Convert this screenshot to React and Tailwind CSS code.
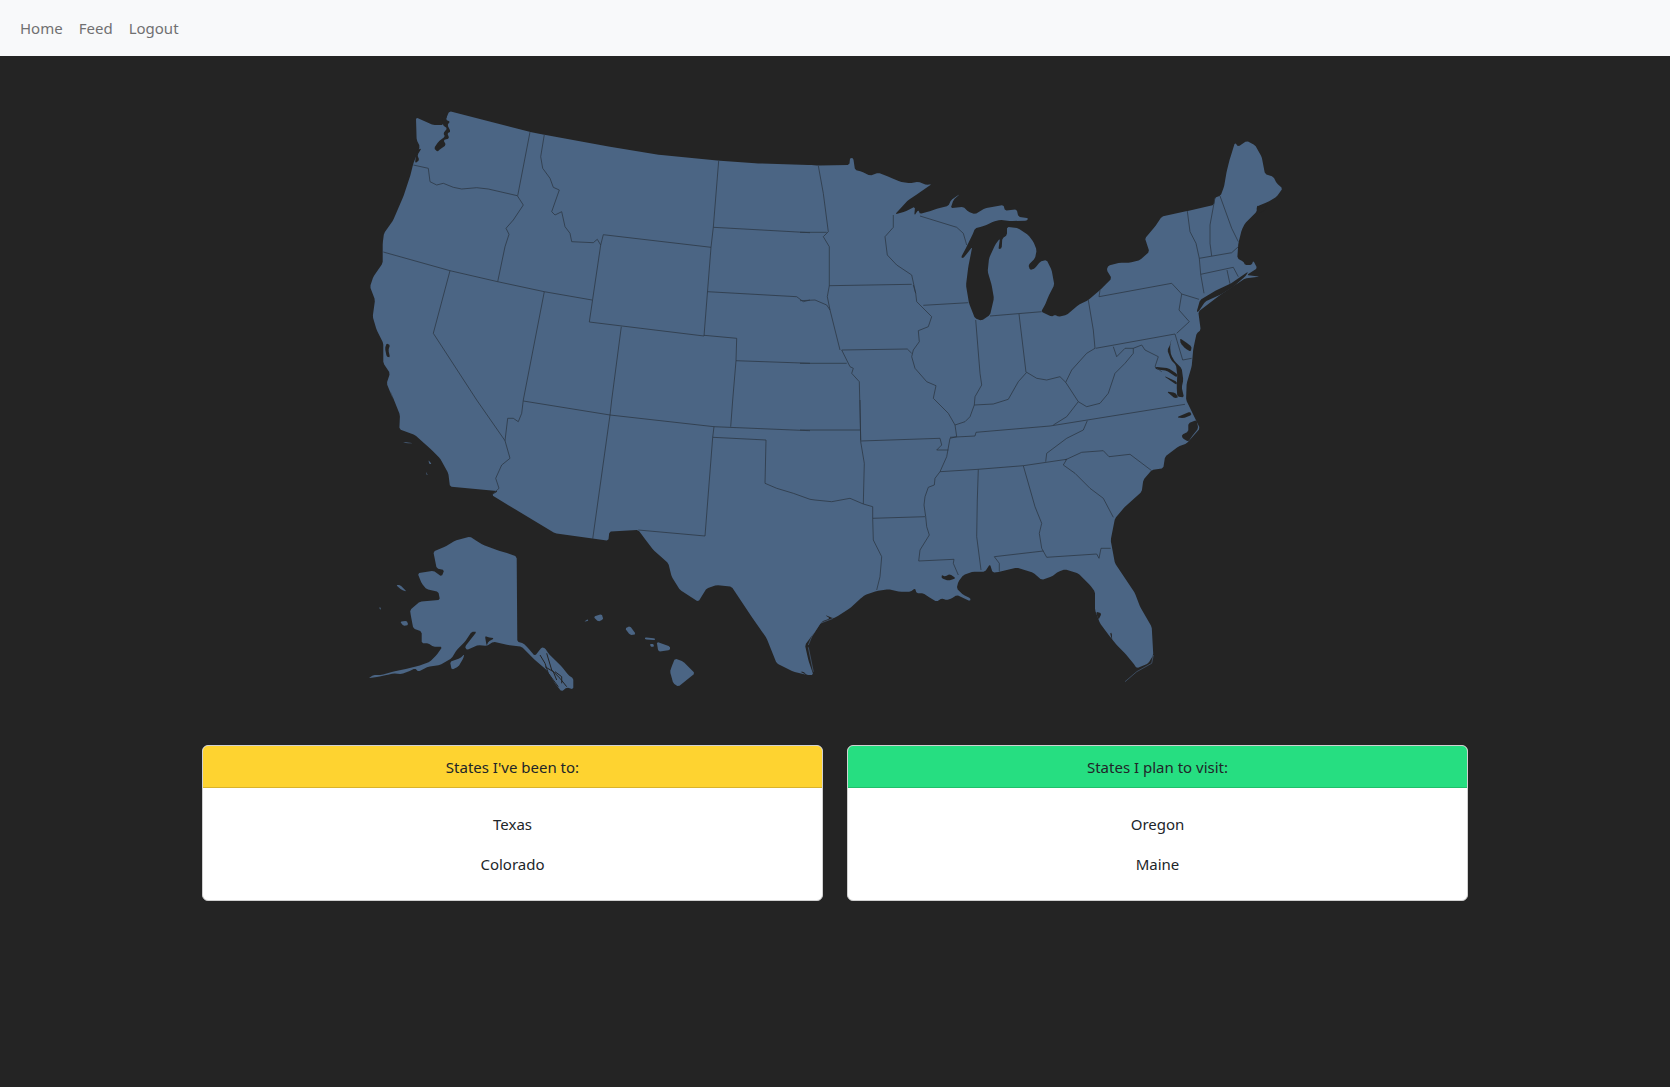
const parse = (ox, oy, s) =>
  s.trim().split(/\s+/).map((p) => {
    const [x, y] = p.split(",").map(Number);
    return [ox + x / 3, oy + y / 3];
  });
const Z1 = (s) => parse(360, 100, s);
const Z2 = (s) => parse(800, 120, s);
const Z3 = (s) => parse(360, 390, s);
const Z4 = (s) => parse(800, 400, s);
const Z8 = (s) => parse(1130, 130, s);
const Z9 = (s) => parse(1060, 300, s);
const ZL = (s) => parse(885, 170, s);
const ZG = (s) => parse(800, 560, s);
const ZA = (s) => parse(365, 530, s);
const d = (pts, close = true) =>
  "M" + pts.map(([x, y]) => x.toFixed(1) + " " + y.toFixed(1)).join("L") + (close ? "Z" : "");
const soften = (pts) => {
  const out = [];
  for (let i = 0; i < pts.length; i++) {
    const a = pts[i];
    const b = pts[(i + 1) % pts.length];
    const len = Math.hypot(b[0] - a[0], b[1] - a[1]) || 1;
    const cut = Math.min(0.2, 1.5 / len);
    out.push([a[0] + (b[0] - a[0]) * cut, a[1] + (b[1] - a[1]) * cut]);
    out.push([a[0] + (b[0] - a[0]) * (1 - cut), a[1] + (b[1] - a[1]) * (1 - cut)]);
  }
  return out;
};

const mainland = [
  ...Z1("168,52 220,75 250,75 268,33 510,96 553,104 750,140 900,165 1076,182 1190,190 1350,195"),
  ...Z2("55,137 148,135 150,114 160,115 165,150 185,155 210,167 235,158 270,172 300,185 330,190"),
  ...ZL("100,35 125,45 140,42 100,70 70,90 30,133 60,125 90,110 88,137 100,120 105,132 130,125 160,115 190,108 198,90 225,72 205,90 197,115 235,110 250,125 270,133 300,115 355,105 360,122 395,118 400,140 430,145 425,152 378,153 345,150 325,155 305,165 290,170 270,175 262,195 245,230 228,262 235,265 262,230 250,290 243,345 252,400 270,445 290,452 315,435 327,385 320,345 308,305 312,265 330,225 345,205 340,238 350,235 352,205 366,195 366,170 400,175 430,195 445,215 455,240 450,265 430,285 435,300 450,295 465,275 485,270 500,300 508,345 490,380 480,405 468,425 500,440 510,435"),
  ...Z2("775,590 800,585 835,555 865,540 900,510 935,475 920,450 925,437 960,428 990,428 1020,420 1048,395 1040,370 1035,355 1065,320 1085,290"),
  ...Z8("172,243 252,225 255,203 272,197 282,170 290,125 300,85 315,38 325,50 350,33 375,45 395,80 405,132 430,140 440,160 458,175 440,200 415,215 380,230 380,245 345,280 335,300 325,340 322,385 340,395 345,405 365,405 370,392 382,415 350,435 390,440 345,445 320,462 270,495 205,545 212,600"),
  ...Z9("410,100 400,145 395,200 380,250 378,300 420,385 380,430"),
  ...Z4("1135,140 1095,170 1090,205 1055,210 1030,240 1025,275 975,320 945,355 932,420 945,490 1005,580 1020,620 1055,680 1060,765 1045,790 1010,805 1000,790 975,760 950,735 930,710 900,670 885,630 885,575 870,555 835,520 795,508 775,515 755,530 725,540 700,518 650,503 600,515 578,518 570,492 555,515 520,515 490,525 475,545 470,565 490,585 512,595 510,603"),
  ...ZG("470,105 455,115 440,120 425,115 410,125 385,110 370,100 350,100 345,85 332,95 300,95 265,88 230,93 195,105 180,117 168,95 185,90 190,108 150,145 110,170 100,175 75,165 90,175 65,185 45,215 30,235 15,255 25,300 40,345 20,345 10,335 0,335"),
  ...Z3("1340,855 1300,845 1250,820 1220,745 1175,680 1115,590 1070,585 1040,595 1015,635 960,600 935,560 925,520 880,480 850,440 835,420 748,425 745,452 585,430 395,315 415,303 270,290 265,250 240,205 215,180 165,135 118,118 120,75 90,0"),
  ...Z1("100,900 80,850 90,820 70,790 70,730 50,690 38,650 45,600 30,560 40,530 68,490 68,430 72,400 100,360 130,290 150,230 160,190 180,140 170,120"),
];

const land = [
  mainland,
  ZA("205,65 240,50 270,32 315,20 330,30 355,45 400,62 430,70 455,80 457,335 475,340 490,355 510,378 530,352 540,355 550,370 590,410 610,435 625,445 625,478 605,472 590,485 570,460 545,420 510,390 470,350 430,345 385,335 365,348 340,345 305,360 300,350 335,305 320,305 300,335 275,360 260,385 225,405 190,410 160,425 150,415 130,425 110,432 85,430 65,435 40,440 10,445 25,435 50,435 85,425 130,415 160,408 195,395 215,375 232,350 205,350 190,340 170,340 170,305 145,295 138,260 135,240 165,215 225,210 220,185 185,178 170,160 158,130 205,122 230,140 238,120 215,115"),
  ZA("255,395 285,385 298,372 295,385 280,410 260,420"),
  ZA("105,275 125,272 130,285 115,288"),
  ZA("93,165 105,165 125,185 110,180"),
  ZA("42,232 47,233 47,240"),
  Z3("935,830 945,805 970,815 1005,850 955,890 940,880 930,845"),
  Z3("890,755 930,770 930,780 895,785"),
  Z3("855,742 885,745 885,750 855,748"),
  Z3("795,715 810,708 828,733 810,735"),
  Z3("700,680 725,672 730,688 715,695"),
  Z3("672,695 683,688 685,692"),
  Z3("870,762 880,762 882,770 872,770"),
  Z3("127,155 160,160 140,160"),
  Z3("205,210 215,222 208,222"),
  Z3("198,245 203,255 200,255"),
];

const BG = "#242424";

const water = [
  Z1("248,48 262,42 258,60 270,65 262,75 272,95 262,100 268,115 250,120 258,135 240,148 232,155 222,145 235,125 255,110 250,100 262,85 248,75"),
  Z1("170,150 185,145 172,165 178,180 165,190"),
  Z1("80,730 90,735 85,750 90,772 80,770 75,745"),
  Z8("200,545 210,510 260,480 300,462 340,435 355,425 345,440 310,470 270,495 225,515 205,545"),
  Z8("380,225 395,235 415,215 405,240 385,250"),
  Z9("335,115 330,135 322,150 333,180 348,195 352,225 350,260 352,290 372,292 365,262 370,240 365,205 345,185 333,165 330,140"),
  Z9("288,208 285,200 325,205 352,222 350,232 320,212"),
  Z9("312,228 350,245 350,255"),
  Z9("320,275 345,278 355,292 345,295"),
  Z9("360,115 375,125 395,140 392,155 375,145 362,130"),
  Z9("350,352 390,335 395,345 370,355"),
  Z9("365,405 385,395 385,370 410,360 415,385 395,410 385,425 368,415"),
  ZG("425,45 435,50 450,42 468,55 445,62 425,55"),
  Z4("888,635 905,640 895,660"),
  Z4("930,700 935,698 937,722"),
  ZA("360,318 370,322 388,325 370,335 365,348"),
];

const channels = [
  ZA("525,375 540,400 550,430 580,470"),
  ZA("545,370 560,420 585,445 605,470"),
  ZA("540,410 565,425 575,450"),
  ZA("570,425 590,440 590,460"),
];

const barriers = [
  ZG("25,255 35,230 60,190 100,175"),
  ZG("25,262 40,335"),
  Z4("1060,765 1055,790 1010,815 975,845"),
];

const borders = [
  Z1("160,195 205,205 210,245 230,255 250,250 280,262 305,267 350,263 385,267 472,287"),
  Z1("510,96 473,287"),
  Z1("553,104 542,170 548,205 570,235 580,262 598,270 575,335 585,345 605,335 615,380 630,400 635,425 700,428 712,418 722,435"),
  Z1("472,287 490,315 460,360 438,385 447,403 435,440 413,545"),
  Z1("70,456 270,512 413,545 553,575 696,600"),
  [...Z1("270,512 220,700 350,900"), ...Z3("435,152")],
  [...Z1("553,575 490,900"), ...Z3("485,70 475,95 460,85 443,85 435,152 450,205 425,225 407,265 417,295 395,315")],
  Z1("722,435 730,404 1053,442 1032,708 688,666 722,435"),
  Z1("1076,182 1060,382 1053,442"),
  Z1("1060,382 1350,398"),
  Z1("1043,575 1310,590 1330,605 1350,600"),
  [...Z1("784,680 755,900"), ...Z3("750,75")],
  [...Z1("1032,706 1130,715 1128,782 1118,900"), ...Z3("1112,110")],
  Z1("1128,782 1350,790"),
  Z3("490,33 750,75 1062,110 1350,122"),
  Z3("750,75 698,447"),
  Z3("1062,110 1058,142 1035,438 835,420"),
  [...Z3("1058,142 1218,150 1215,280 1250,295 1300,310 1350,328"), ...Z4("45,300 95,305 150,295 190,312 218,320 218,355 220,420 245,470 240,530 230,570")],
  Z4("180,0 182,125 193,190 190,312"),
  Z4("182,123 420,115 425,135 410,150 445,150"),
  Z4("0,90 180,90"),
  Z4("218,355 375,350"),
  Z4("470,110 450,115 440,170 420,215 405,235 403,255 385,262 375,290 372,315 377,350 380,380 388,405 360,450 356,483 462,478 460,490 475,525"),
  Z4("535,208 532,300 530,410 543,510"),
  Z4("420,215 535,208 670,197 800,178"),
  Z4("670,197 705,320 725,370 718,400 725,445 740,472"),
  Z4("740,472 890,462 897,475 903,445 932,445"),
  Z4("598,515 598,490 583,470 730,453"),
  Z4("800,178 790,195 825,220 870,265 910,295 940,352"),
  Z4("795,180 845,157 910,152 927,170 990,163 1055,212"),
  Z4("737,185 740,160 800,115 850,90 862,62"),
  Z4("450,112 525,108 528,97 750,78 1155,13"),
  Z4("760,75 800,50 835,5"),
  Z2("55,137 70,220 85,335 70,350 88,380 88,497 82,530 90,570 120,690"),
  Z2("0,337 80,337"),
  Z2("0,542 45,540 80,555 90,570"),
  Z2("125,690 322,687 335,700"),
  Z2("125,690 150,740 160,745 155,760 178,785 182,960"),
  Z2("0,730 140,730"),
  Z2("280,285 280,322 255,350 262,405 290,435 335,465 347,520"),
  Z2("88,497 335,493"),
  Z2("340,495 347,520 350,545 395,590 385,620 355,632 358,665 340,690 335,710 345,745 380,785 408,797 400,835 445,880 465,915 470,950"),
  Z2("370,556 505,548"),
  Z2("527,600 540,760 545,795 525,830 523,855"),
  Z2("465,915 495,905 510,890 523,855 580,852 625,838 655,785 680,757 710,775 740,780 780,770 797,787 835,845 860,860 900,850 925,820 945,760 975,730 1000,700 1000,685 975,685 950,710 940,680"),
  Z2("797,787 815,750 860,700 885,685 880,630 865,540"),
  Z2("887,685 1125,642"),
  Z2("657,582 678,757"),
  Z2("570,588 725,575"),
  Z2("360,288 470,322 490,340 500,375"),
  Z2("900,510 897,530 1115,490 1145,522 1197,538"),
  Z2("1145,522 1137,570 1168,605 1130,640"),
  Z2("1125,642 1148,720 1175,715"),
  Z2("1000,685 1025,675 1035,690 1075,710 1065,740 1085,755"),
  Z8("172,243 180,305 198,340 208,385 212,433 222,490"),
  Z8("255,203 240,285 240,340 245,378"),
  Z8("270,198 305,295 325,335"),
  Z8("208,385 305,368 325,350"),
  Z8("212,433 310,412 325,440"),
  Z8("291,420 300,462"),
];

function UsMap() {
  return (
    <svg viewBox="335 56 1000 660" width="1000" height="660" className="block">
      {land.map((p, i) => (
        <path key={i} d={d(soften(p))} fill="#4b6584" />
      ))}
      {water.map((p, i) => (
        <path key={i} d={d(soften(p))} fill={BG} />
      ))}
      {channels.map((p, i) => (
        <path key={i} d={d(p, false)} fill="none" stroke={BG} strokeWidth="1" />
      ))}
      {barriers.map((p, i) => (
        <path key={i} d={d(p, false)} fill="none" stroke="#4b6584" strokeWidth="0.6" />
      ))}
      {borders.map((p, i) => (
        <path key={i} d={d(p, false)} fill="none" stroke="#2b3542" strokeWidth="0.75" strokeLinejoin="round" />
      ))}
    </svg>
  );
}

function StateCard({ title, items, headerClass }) {
  return (
    <div className="flex-1 rounded-md border border-[#d0d0d0] bg-white overflow-hidden">
      <div className={`h-[42px] flex items-center justify-center border-b pt-[1px] ${headerClass}`}>{title}</div>
      <div className="pt-[24px] pb-[24px] flex flex-col gap-4 items-center">
        {items.map((t) => (
          <p key={t} className="h-6 leading-6">{t}</p>
        ))}
      </div>
    </div>
  );
}

export default function App() {
  return (
    <div className="min-h-[1087px] bg-[#242424] text-[#212529] text-[15px] font-['Noto_Sans','Open_Sans',sans-serif]">
      <nav className="h-14 bg-[#f8f9fa] flex items-center pl-3 pt-[1px] text-[#707071]">
        <a className="px-2">Home</a>
        <a className="px-2">Feed</a>
        <a className="px-2">Logout</a>
      </nav>
      <div className="flex justify-center">
        <UsMap />
      </div>
      <div className="flex gap-6 w-[1266px] mx-auto mt-[29px]">
        <StateCard title="States I've been to:" items={["Texas", "Colorado"]} headerClass="bg-[#fed330] border-[#d9b32b]" />
        <StateCard title="States I plan to visit:" items={["Oregon", "Maine"]} headerClass="bg-[#26de81] border-[#20bf6b]" />
      </div>
    </div>
  );
}
